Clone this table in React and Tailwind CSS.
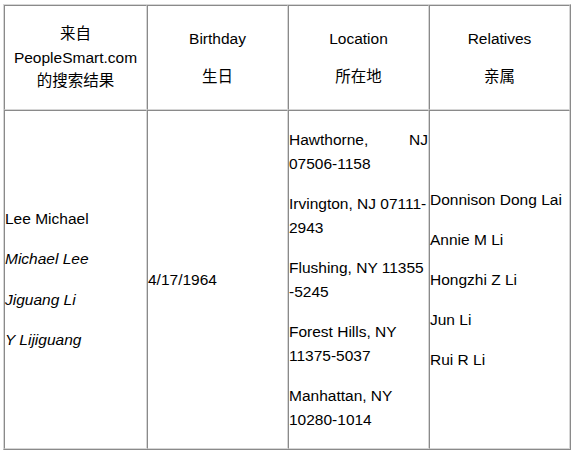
const cell =
  'border border-t-[#8a8a8a] border-l-[#8a8a8a] border-r-[#d6d6d6] border-b-[#d6d6d6] flex flex-col justify-center';

const names = [
  { text: 'Lee Michael', italic: false },
  { text: 'Michael Lee', italic: true },
  { text: 'Jiguang Li', italic: true },
  { text: 'Y Lijiguang', italic: true },
];

const addresses = [
  ['Irvington, NJ 07111-', '2943'],
  ['Flushing, NY 11355', '-5245'],
  ['Forest Hills, NY', '11375-5037'],
  ['Manhattan, NY', '10280-1014'],
];

const relatives = ['Donnison Dong Lai', 'Annie M Li', 'Hongzhi Z Li', 'Jun Li', 'Rui R Li'];

export default function App() {
  return (
    <div
      className="bg-white w-[575px] h-[454px] pt-[4px] pl-[3px] text-black text-[15.5px]"
      style={{ fontFamily: '"Liberation Sans", Arial, "Noto Sans CJK SC", sans-serif' }}
    >
      <div className="grid grid-cols-[143px_141px_141px_141px] grid-rows-[105px_339px] w-[568px] h-[446px] border border-t-[#d6d6d6] border-l-[#d6d6d6] border-r-[#8a8a8a] border-b-[#8a8a8a]">
        {/* header row */}
        <div className={`${cell} items-center text-center leading-[23.5px]`}>
          <span>来自</span>
          <span>PeopleSmart.com</span>
          <span>的搜索结果</span>
        </div>
        <div className={`${cell} items-center gap-[14px] leading-[24px]`}>
          <span>Birthday</span>
          <span>生日</span>
        </div>
        <div className={`${cell} items-center gap-[14px] leading-[24px]`}>
          <span>Location</span>
          <span>所在地</span>
        </div>
        <div className={`${cell} items-center gap-[14px] leading-[24px]`}>
          <span>Relatives</span>
          <span>亲属</span>
        </div>

        {/* body row */}
        <div className={`${cell} gap-[16.5px] leading-[24px]`}>
          {names.map((n) => (
            <p key={n.text} className={n.italic ? 'italic' : ''}>
              {n.text}
            </p>
          ))}
        </div>
        <div className={`${cell} leading-[24px]`}>
          <p>4/17/1964</p>
        </div>
        <div className={`${cell} gap-[16px] leading-[24px]`}>
          <p className="flex flex-col">
            <span className="flex justify-between">
              <span>Hawthorne,</span>
              <span>NJ</span>
            </span>
            <span>07506-1158</span>
          </p>
          {addresses.map((a) => (
            <p key={a[0]} className="flex flex-col">
              <span>{a[0]}</span>
              <span>{a[1]}</span>
            </p>
          ))}
        </div>
        <div className={`${cell} gap-[16px] leading-[24px]`}>
          {relatives.map((r) => (
            <p key={r}>{r}</p>
          ))}
        </div>
      </div>
    </div>
  );
}
